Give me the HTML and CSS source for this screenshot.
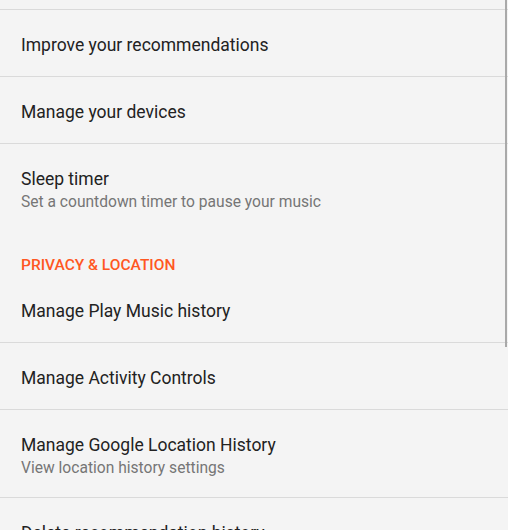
FILE: index.html
```html
<!DOCTYPE html>
<html lang="en">
<head>
  <meta charset="UTF-8" />
  <meta name="viewport" content="width=device-width, initial-scale=1.0" />
  <title>Settings</title>
  <link rel="stylesheet" href="styles.css">
</head>
<body>
  <div class="settings">
    <div class="row cut"></div>
    <div class="row">
      <div class="title">Improve your recommendations</div>
    </div>
    <div class="row">
      <div class="title">Manage your devices</div>
    </div>
    <div class="row no-line">
      <div class="title">Sleep timer</div>
      <div class="sub">Set a countdown timer to pause your music</div>
    </div>
    <div class="section">PRIVACY &amp; LOCATION</div>
    <div class="row">
      <div class="title">Manage Play Music history</div>
    </div>
    <div class="row">
      <div class="title">Manage Activity Controls</div>
    </div>
    <div class="row">
      <div class="title">Manage Google Location History</div>
      <div class="sub">View location history settings</div>
    </div>
    <div class="row">
      <div class="title">Delete recommendation history</div>
    </div>
  </div>
  <div class="scrollbar"></div>
</body>
</html>
```

FILE: styles.css
```css
body {
  margin: 0;
  background-color: #f4f4f4;
  font-family: Roboto, "Noto Sans", sans-serif;
  color: #222;
  overflow: hidden;
}
.settings {
  display: flex;
  flex-direction: column;
}
.row {
  padding: 23px 21px 19px;
  border-bottom: 1px solid #dadada;
}
.row.cut {
  padding: 0;
  height: 9px;
}
.row.no-line {
  border-bottom: none;
}
.title {
  font-size: 17.5px;
  line-height: 24px;
}
.sub {
  font-size: 15.6px;
  line-height: 23px;
  margin-bottom: -2px;
  color: #767676;
}
.section {
  padding: 23px 21px 0;
  font-size: 15.5px;
  line-height: 22px;
  font-weight: 500;
  color: #ff5722;
}
.scrollbar {
  position: absolute;
  top: 0;
  right: 1px;
  width: 2px;
  height: 347px;
  background-color: #a9a9a9;
}
```
